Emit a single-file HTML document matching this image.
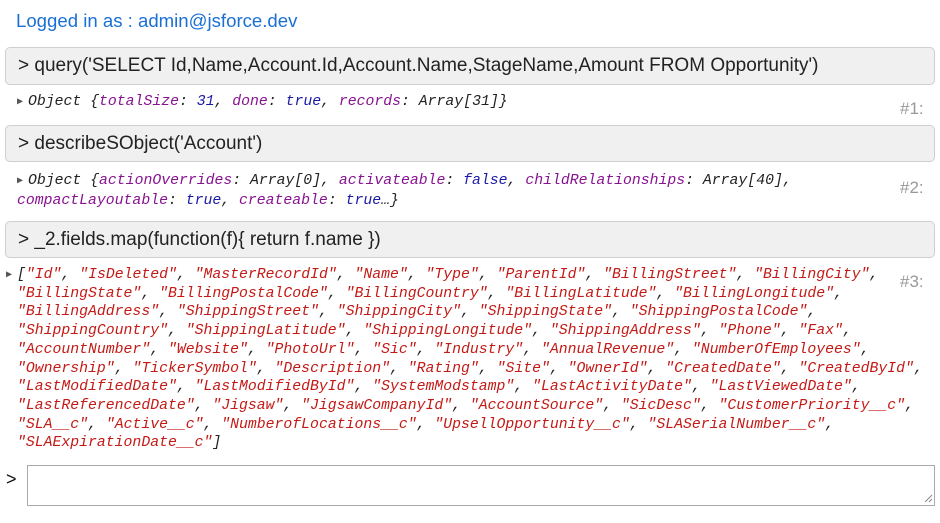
<!DOCTYPE html><html><head><style>
body{margin:0;width:940px;height:523px;background:#fff;font-family:"Liberation Sans",Helvetica,sans-serif;position:relative;overflow:hidden}
.a{position:absolute}
.login{left:16px;top:10px;font-size:18.6px;color:#1a6fd6}
.box{left:5px;width:930px;background:#f0f0f0;border:1px solid #cfcfcf;border-radius:5px;font-size:19px;color:#222;box-sizing:border-box;padding-left:12px}
.out{left:17px;font-family:"Liberation Mono","DejaVu Sans Mono",monospace;font-style:italic;font-size:14.8px;line-height:18.7px;white-space:pre;color:#222}
.tri{font-style:normal;font-size:10px;color:#555;vertical-align:1px;display:inline-block;width:11px}
.k{color:#881391}.v{color:#1a1aa6}.s{color:#c41a16}
.n{left:900px;font-size:17px;color:#999}
</style></head><body>
<div class="a login">Logged in as : admin@jsforce.dev</div>
<div class="a box" style="top:47px;height:38px;line-height:36px">&gt; query('SELECT Id,Name,Account.Id,Account.Name,StageName,Amount FROM Opportunity')</div>
<div class="a out" style="top:93px"><span class="tri">▶</span>Object {<span class="k">totalSize</span>: <span class="v">31</span>, <span class="k">done</span>: <span class="v">true</span>, <span class="k">records</span>: Array[31]}</div>
<div class="a n" style="top:99px">#1:</div>
<div class="a box" style="top:125px;height:37px;line-height:35px">&gt; describeSObject('Account')</div>
<div class="a out" style="top:172px"><span class="tri">▶</span>Object {<span class="k">actionOverrides</span>: Array[0], <span class="k">activateable</span>: <span class="v">false</span>, <span class="k">childRelationships</span>: Array[40],
<span class="k">compactLayoutable</span>: <span class="v">true</span>, <span class="k">createable</span>: <span class="v">true</span>…}</div>
<div class="a n" style="top:178px">#2:</div>
<div class="a box" style="top:221px;height:37px;line-height:35px">&gt; _2.fields.map(function(f){ return f.name })</div>
<div class="a n" style="top:272px">#3:</div>
<div class="a out" style="top:266px;left:6px"><span class="tri">▶</span></div>
<div class="a out" style="top:266px"><span>[</span><span class="s">"Id"</span>, <span class="s">"IsDeleted"</span>, <span class="s">"MasterRecordId"</span>, <span class="s">"Name"</span>, <span class="s">"Type"</span>, <span class="s">"ParentId"</span>, <span class="s">"BillingStreet"</span>, <span class="s">"BillingCity"</span>,
<span class="s">"BillingState"</span>, <span class="s">"BillingPostalCode"</span>, <span class="s">"BillingCountry"</span>, <span class="s">"BillingLatitude"</span>, <span class="s">"BillingLongitude"</span>,
<span class="s">"BillingAddress"</span>, <span class="s">"ShippingStreet"</span>, <span class="s">"ShippingCity"</span>, <span class="s">"ShippingState"</span>, <span class="s">"ShippingPostalCode"</span>,
<span class="s">"ShippingCountry"</span>, <span class="s">"ShippingLatitude"</span>, <span class="s">"ShippingLongitude"</span>, <span class="s">"ShippingAddress"</span>, <span class="s">"Phone"</span>, <span class="s">"Fax"</span>,
<span class="s">"AccountNumber"</span>, <span class="s">"Website"</span>, <span class="s">"PhotoUrl"</span>, <span class="s">"Sic"</span>, <span class="s">"Industry"</span>, <span class="s">"AnnualRevenue"</span>, <span class="s">"NumberOfEmployees"</span>,
<span class="s">"Ownership"</span>, <span class="s">"TickerSymbol"</span>, <span class="s">"Description"</span>, <span class="s">"Rating"</span>, <span class="s">"Site"</span>, <span class="s">"OwnerId"</span>, <span class="s">"CreatedDate"</span>, <span class="s">"CreatedById"</span>,
<span class="s">"LastModifiedDate"</span>, <span class="s">"LastModifiedById"</span>, <span class="s">"SystemModstamp"</span>, <span class="s">"LastActivityDate"</span>, <span class="s">"LastViewedDate"</span>,
<span class="s">"LastReferencedDate"</span>, <span class="s">"Jigsaw"</span>, <span class="s">"JigsawCompanyId"</span>, <span class="s">"AccountSource"</span>, <span class="s">"SicDesc"</span>, <span class="s">"CustomerPriority__c"</span>,
<span class="s">"SLA__c"</span>, <span class="s">"Active__c"</span>, <span class="s">"NumberofLocations__c"</span>, <span class="s">"UpsellOpportunity__c"</span>, <span class="s">"SLASerialNumber__c"</span>,
<span class="s">"SLAExpirationDate__c"</span>]</div>
<div class="a" style="left:6px;top:469px;font-size:18px;color:#111">&gt;</div>
<div class="a" style="left:27px;top:465px;width:908px;height:41px;border:1px solid #aaa;box-sizing:border-box;background:#fff"></div>
<svg class="a" style="left:924px;top:494px" width="9" height="9"><path d="M1 8L8 1M5 8L8 5" stroke="#888" stroke-width="1"/></svg>
</body></html>
